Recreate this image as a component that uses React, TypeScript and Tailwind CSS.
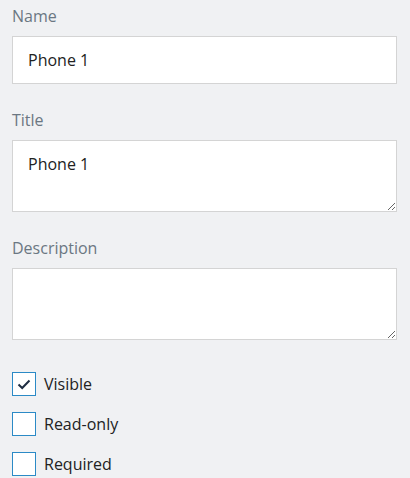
import React from "react";

const font = { fontFamily: '"Open Sans", "Noto Sans", sans-serif' };

function Label({ children }: { children: React.ReactNode }) {
  return <div className="h-[20px] text-[16px] leading-[20px] text-[#6b7782] mb-[10px]">{children}</div>;
}

function Check({ label, checked }: { label: string; checked?: boolean }) {
  return (
    <div className="flex items-center h-[24px]">
      <div className="w-[24px] h-[24px] border-[1.5px] border-[#2b8ac6] bg-white flex items-center justify-center">
        {checked && (
          <svg width="14" height="12" viewBox="0 0 14 12">
            <path d="M1.5 6.5 L5.2 10 L12.5 2.5" fill="none" stroke="#1f2d42" strokeWidth="2" />
          </svg>
        )}
      </div>
      <span className="ml-[8px] text-[16px] leading-[24px] text-[#222]">{label}</span>
    </div>
  );
}

export default function App() {
  return (
    <div className="w-[410px] h-[478px] bg-[#f0f1f3] pl-[12px] pt-[6px] overflow-hidden" style={font}>
      <div className="w-[385px]">
        <Label>Name</Label>
        <input
          readOnly
          value="Phone 1"
          className="block w-full h-[48px] border border-[#d4d4d4] bg-white px-[15px] text-[16px] text-[#222] outline-none"
          style={font}
        />
        <div className="mt-[26px]">
          <Label>Title</Label>
          <textarea
            readOnly
            value="Phone 1"
            className="block w-full h-[72px] border border-[#d4d4d4] bg-white px-[15px] pt-[12px] text-[16px] leading-[22px] text-[#222] outline-none resize-y"
            style={font}
          />
        </div>
        <div className="mt-[26px]">
          <Label>Description</Label>
          <textarea
            readOnly
            value=""
            className="block w-full h-[72px] border border-[#d4d4d4] bg-white px-[15px] pt-[12px] text-[16px] leading-[22px] text-[#222] outline-none resize-y"
            style={font}
          />
        </div>
        <div className="mt-[32px] flex flex-col gap-[16px]">
          <Check label="Visible" checked />
          <Check label="Read-only" />
          <Check label="Required" />
        </div>
      </div>
    </div>
  );
}
